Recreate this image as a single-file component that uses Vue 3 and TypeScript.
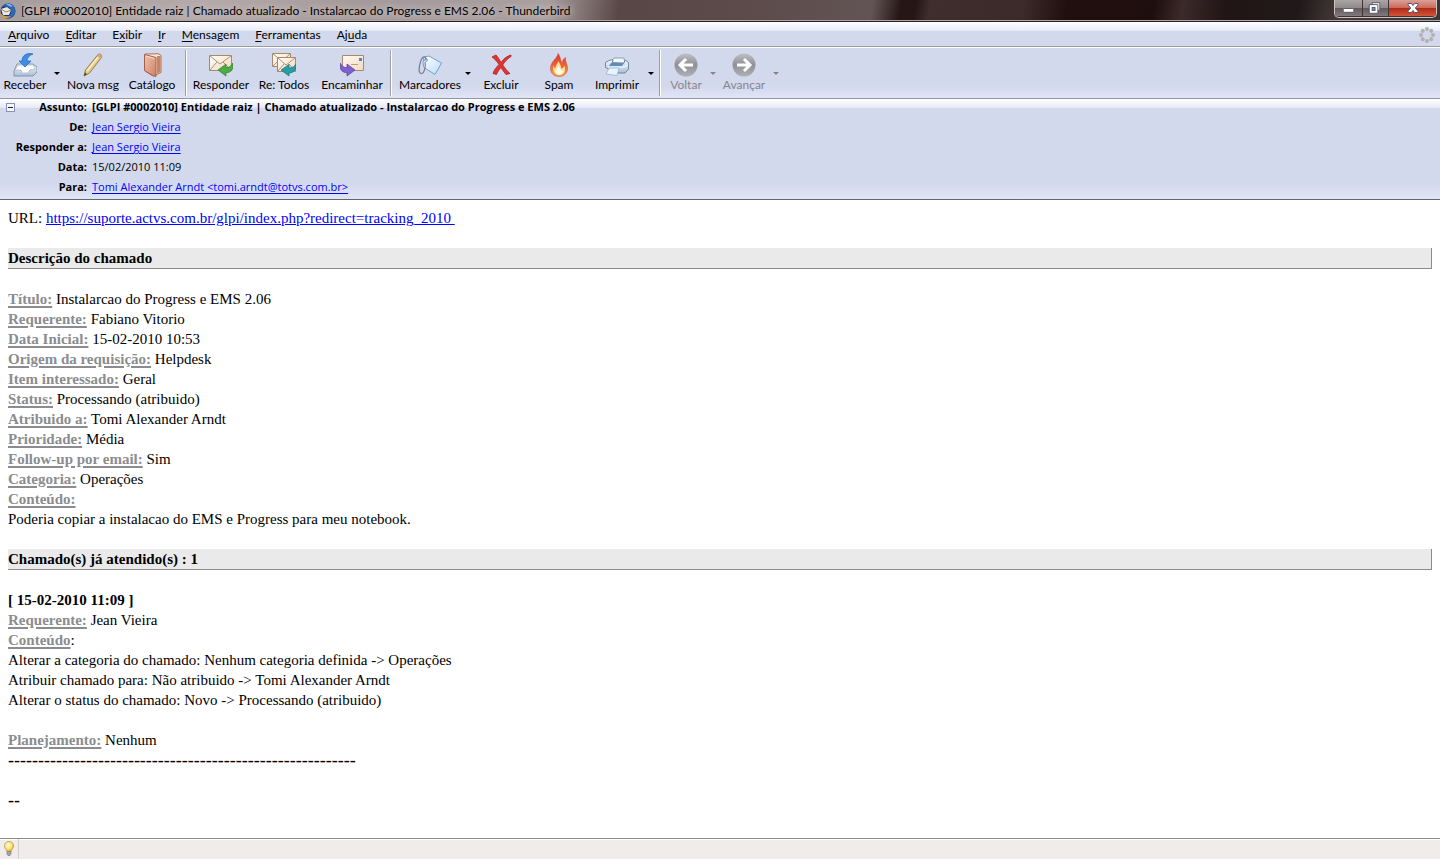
<script setup lang="ts">
interface MenuEntry { before: string; key: string; after: string }
interface Field { label: string; value: string }

const windowTitle = '[GLPI #0002010] Entidade raiz | Chamado atualizado - Instalarcao do Progress e EMS 2.06 - Thunderbird'

const menus: MenuEntry[] = [
  { before: '', key: 'A', after: 'rquivo' },
  { before: '', key: 'E', after: 'ditar' },
  { before: 'E', key: 'x', after: 'ibir' },
  { before: '', key: 'I', after: 'r' },
  { before: '', key: 'M', after: 'ensagem' },
  { before: '', key: 'F', after: 'erramentas' },
  { before: 'Aj', key: 'u', after: 'da' },
]

const details: Field[] = [
  { label: 'Título:', value: 'Instalarcao do Progress e EMS 2.06' },
  { label: 'Requerente:', value: 'Fabiano Vitorio' },
  { label: 'Data Inicial:', value: '15-02-2010 10:53' },
  { label: 'Origem da requisição:', value: 'Helpdesk' },
  { label: 'Item interessado:', value: 'Geral' },
  { label: 'Status:', value: 'Processando (atribuido)' },
  { label: 'Atribuido a:', value: 'Tomi Alexander Arndt' },
  { label: 'Prioridade:', value: 'Média' },
  { label: 'Follow-up por email:', value: 'Sim' },
  { label: 'Categoria:', value: 'Operações' },
  { label: 'Conteúdo:', value: '' },
]

const changes: string[] = [
  'Alterar a categoria do chamado: Nenhum categoria definida -> Operações',
  'Atribuir chamado para: Não atribuido -> Tomi Alexander Arndt',
  'Alterar o status do chamado: Novo -> Processando (atribuido)',
]

const rule = '-'.repeat(58)
const ring: number[] = [0, 45, 90, 135, 180, 225, 270, 315]
</script>

<template>
  <div class="window">
    <svg class="defs" width="0" height="0" aria-hidden="true">
      <defs>
        <linearGradient id="paper" x1="0" y1="0" x2="1" y2="1">
          <stop offset="0" stop-color="#fffdf6" /><stop offset="1" stop-color="#f3d9bd" />
        </linearGradient>
        <linearGradient id="steel" x1="0" y1="0" x2="0" y2="1">
          <stop offset="0" stop-color="#f4f8fc" /><stop offset="1" stop-color="#a9bfd6" />
        </linearGradient>
        <linearGradient id="sky" x1="0" y1="0" x2="1" y2="1">
          <stop offset="0" stop-color="#ffffff" /><stop offset="1" stop-color="#bcdcf8" />
        </linearGradient>
        <linearGradient id="book" x1="0" y1="0" x2="1" y2="1">
          <stop offset="0" stop-color="#efc3ae" /><stop offset="1" stop-color="#cf8063" />
        </linearGradient>
        <linearGradient id="fire" x1="0" y1="0" x2="0" y2="1">
          <stop offset="0" stop-color="#d8302c" /><stop offset="0.55" stop-color="#f0683a" /><stop offset="1" stop-color="#f9a648" />
        </linearGradient>
        <linearGradient id="disc" x1="0" y1="0" x2="0" y2="1">
          <stop offset="0" stop-color="#bfc0c5" /><stop offset="0.5" stop-color="#8f9096" /><stop offset="1" stop-color="#b0b1b7" />
        </linearGradient>
        <radialGradient id="glow" cx="0.4" cy="0.35" r="0.7">
          <stop offset="0" stop-color="#fffce0" /><stop offset="0.6" stop-color="#fbe36a" /><stop offset="1" stop-color="#dfa02c" />
        </radialGradient>
      </defs>
    </svg>

    <header class="titlebar">
      <svg class="app-icon" viewBox="0 0 16 16">
        <circle cx="8" cy="8" r="7.5" fill="#17346f" />
        <path d="M1 5C3 1 8-.5 12 1.500C15 3.500 16.500 8 14 12C12 15 8 16 5 15C9 14 12 11 11 7C10 4 5 2 1 5Z" fill="#2c69b5" />
        <path d="M6 1C9 0 12 2 12.500 4L9 3Z" fill="#82b9e8" />
        <path d="M1 6L7 4L11 7L9 12L3 12Z" fill="#eee9db" />
        <path d="M1 6L6 9L11 7" fill="none" stroke="#94866f" />
        <path d="M0 9C2 13 6 14 11 13C8 16 3 16 1 13Z" fill="#d09a4a" />
      </svg>
      <h1 class="title">{{ windowTitle }}</h1>
      <div class="window-buttons">
        <button type="button" class="win minimize" aria-label="Minimizar">
          <svg viewBox="0 0 28 16"><rect x="8.500" y="8.500" width="11" height="4" rx="1" fill="#fff" stroke="#54566a" /></svg>
        </button>
        <button type="button" class="win restore" aria-label="Restaurar">
          <svg viewBox="0 0 26 16">
            <path d="M9.500 2.500H17.500V10.500H9.500Z" fill="#fff" stroke="#54566a" />
            <path d="M6.500 4.500H15.500V13.500H6.500Z" fill="#fff" stroke="#54566a" />
            <rect x="9.500" y="7.500" width="3" height="3" fill="#8c8a91" stroke="#54566a" />
          </svg>
        </button>
        <button type="button" class="win close" aria-label="Fechar">
          <svg viewBox="0 0 46 16">
            <path d="M18.500 3.500H22L23.500 5.500L25 3.500H28.500V5L25.800 8L28.500 11V12.500H25L23.500 10.500L22 12.500H18.500V11L21.200 8L18.500 5Z" fill="#fff" stroke="#54566a" />
          </svg>
        </button>
      </div>
    </header>

    <nav class="menubar">
      <button v-for="m in menus" :key="m.key" type="button" class="menu">{{ m.before }}<u>{{ m.key }}</u>{{ m.after }}</button>
      <svg class="throbber" viewBox="0 0 16 16">
        <circle v-for="a in ring" :key="a" cx="8" cy="2" r="2" fill="#b1b1b1" :transform="`rotate(${a} 8 8)`" />
      </svg>
    </nav>

    <div class="toolbar">
      <button type="button" class="tool w50">
        <svg viewBox="0 0 24 24">
          <path d="M4 11L1 18V23H20L24 19V14L20 11Z" fill="url(#steel)" stroke="#8195ad" />
          <path d="M5 12H20L22 16L17 17L15 20H9L8 17H2Z" fill="#fff" stroke="#a5b5c8" stroke-width=".7" />
          <path d="M20 1C14-.5 9 2 9 8H6L12 14L18 8H14C14 5 16 2.500 20 1Z" fill="#3f8de4" stroke="#2066bd" stroke-width=".7" />
        </svg>
        <span>Receber</span>
      </button>
      <button type="button" class="drop w13" aria-label="Opções de recebimento"><i></i></button>
      <button type="button" class="tool w60">
        <svg viewBox="0 0 24 24">
          <path d="M3 23L4.500 17L17 1.500C18-.2 22 2 20.500 4.500L8.500 20Z" fill="#e3c98e" stroke="#9c7d45" />
          <path d="M6 18L18 3" stroke="#f9edc8" stroke-width="1.600" />
          <path d="M3 23L4 19.500L6 21.200Z" fill="#4f3c22" />
          <path d="M16 3L19.500 6L21 3.500L18.500 1Z" fill="#d7a583" />
        </svg>
        <span>Nova msg</span>
      </button>
      <button type="button" class="tool w58">
        <svg viewBox="0 0 24 24">
          <path d="M5 1L18.500 .8L21 2.500V19.500L13 23L5 18Z" fill="#f8e6da" stroke="#b06f57" />
          <path d="M17 3L20.500 3V19L17 20.500Z" fill="#c98368" />
          <path d="M4.500 1.500L16 4.500V23.500L12.500 22.500L4.500 17.500Z" fill="url(#book)" stroke="#a55e48" />
          <path d="M6 3L14.500 5.500" stroke="#f8dccd" />
        </svg>
        <span>Catálogo</span>
      </button>
      <span class="separator"></span>
      <button type="button" class="tool w58">
        <svg viewBox="0 0 24 24">
          <path d="M.5 2.500H22.500V17.500H.5Z" fill="url(#paper)" stroke="#a8896b" />
          <path d="M1 3L11 11L22 3M1 17L8 9M22 17L14 9" fill="none" stroke="#ad9276" />
          <path d="M24 10C25 17 21 20 17 19.500V23L9 17L17 11V14.500C20 15 22 13 24 10Z" fill="#4dac43" stroke="#2b7e29" stroke-width=".7" />
        </svg>
        <span>Responder</span>
      </button>
      <button type="button" class="tool w68">
        <svg viewBox="0 0 24 24">
          <path d="M.5.500H18.500V13.500H.5Z" fill="url(#paper)" stroke="#a8896b" />
          <path d="M1 1L10 8L18 1M1 13L7 7" fill="none" stroke="#ad9276" />
          <path d="M5.500 4.500H23.500V18.500H5.500Z" fill="url(#paper)" stroke="#a8896b" />
          <path d="M6 5L14 12L23 5M6 18L12 11M23 18L17 11" fill="none" stroke="#ad9276" />
          <path d="M24 11C25 17 21 20 17 20V23L9 17L17 11.500V15C20 15 22 14 24 11Z" fill="#289da4" stroke="#14747e" stroke-width=".7" />
        </svg>
        <span>Re: Todos</span>
      </button>
      <button type="button" class="tool w68">
        <svg viewBox="0 0 24 24">
          <path d="M2.500 2.500H23.500V17.500H2.500Z" fill="url(#paper)" stroke="#a8896b" />
          <rect x="19" y="5" width="3" height="3" fill="#5b78e6" />
          <path d="M11 11.500H18" stroke="#b59c82" />
          <path d="M0 10C-1 17 3 20 7 19.500V23L15 17L7 11V14.500C4 15 2 13 0 10Z" fill="#8062cd" stroke="#5438a3" stroke-width=".7" />
        </svg>
        <span>Encaminhar</span>
      </button>
      <span class="separator"></span>
      <button type="button" class="tool w66">
        <svg viewBox="0 0 24 24">
          <path d="M5 10L6 4L11 3L23.500 10L17 21.500L6 14.500Z" fill="url(#sky)" stroke="#6f9fd1" />
          <circle cx="8" cy="7" r="1.500" fill="#d3daee" stroke="#6f9fd1" stroke-width=".8" />
          <path d="M8 7C8 2 4 3 2.500 9C.5 15 .5 20 3 20.500C6.500 21 8 13 7 9" fill="none" stroke="#777e8b" stroke-width="1.200" />
        </svg>
        <span>Marcadores</span>
      </button>
      <button type="button" class="drop w9" aria-label="Lista de marcadores"><i></i></button>
      <button type="button" class="tool w58">
        <svg viewBox="0 0 24 24">
          <path d="M3 4L7 2C9 4 10.500 7 12 9.500C14.500 6 18 3 22 2V3.500C18 6 15.500 9 13.700 12C16 15 18 18 21 20.500L17 21.500C15 19 13.500 17 12 14.500C10 17 8 19.500 7.500 21.500L4 20.500C5 17 7.500 14 10 11.500C8 8.500 6 6 3 4Z" fill="#e23530" stroke="#a81d1e" stroke-width=".8" />
        </svg>
        <span>Excluir</span>
      </button>
      <button type="button" class="tool w58">
        <svg viewBox="0 0 24 24">
          <path d="M11 .5C11 5 3.500 8 3.500 15.500C3.500 20 7 23.500 12 23.500C17 23.500 20.500 20 20.500 15.500C20.500 11 18 9 18.500 4.500C16 6 15.500 8 15.500 10C13 8 14 4 11 .5Z" fill="url(#fire)" stroke="#d4513b" stroke-width=".6" />
          <path d="M6.500 12C5 18 8 22 12 22C17 22 19 18 17.500 13C16.500 15 15 15.500 14 15.500C14 12 12.500 10 11 8C11 11 8.500 12 8.500 15.500C7 15 6.500 14 6.500 12Z" fill="#ffe79e" />
          <path d="M12 13C11 15 9 17 9 19C9 23 16 23 16 18C14 18 12 16 12 13Z" fill="#fffdf0" />
        </svg>
        <span>Spam</span>
      </button>
      <button type="button" class="tool w58">
        <svg viewBox="0 0 24 24">
          <path d="M6 9L9 5H19L20 11Z" fill="#f1f7fd" stroke="#87a3bf" />
          <path d="M.5 9.500L5 7H8L7 10H19L20 7L23.500 9.500V16L20 20H12L.5 14.500Z" fill="url(#steel)" stroke="#7087a0" />
          <path d="M6 10H19L17 13H4Z" fill="#5e8db8" />
          <path d="M3 14H19L23 12" fill="none" stroke="#f7fbff" />
          <path d="M4 15H14L12 22.500L1 21Z" fill="#e6f4ff" stroke="#8faac5" stroke-width=".7" />
        </svg>
        <span>Imprimir</span>
      </button>
      <button type="button" class="drop w9" aria-label="Opções de impressão"><i></i></button>
      <span class="separator"></span>
      <button type="button" class="tool w40" disabled>
        <svg viewBox="0 0 24 24">
          <circle cx="12" cy="12" r="11.500" fill="url(#disc)" />
          <path d="M19 12H7M12 6L6 12L12 18" fill="none" stroke="#fff" stroke-width="3" />
        </svg>
        <span>Voltar</span>
      </button>
      <button type="button" class="drop w13" disabled aria-label="Histórico anterior"><i></i></button>
      <button type="button" class="tool w50" disabled>
        <svg viewBox="0 0 24 24">
          <circle cx="12" cy="12" r="11.500" fill="url(#disc)" />
          <path d="M5 12H17M12 6L18 12L12 18" fill="none" stroke="#fff" stroke-width="3" />
        </svg>
        <span>Avançar</span>
      </button>
      <button type="button" class="drop w13" disabled aria-label="Histórico seguinte"><i></i></button>
    </div>

    <section class="headers">
      <button type="button" class="twisty" aria-label="Recolher cabeçalho"></button>
      <dl>
        <dt>Assunto:</dt><dd><b>[GLPI #0002010] Entidade raiz | Chamado atualizado - Instalarcao do Progress e EMS 2.06</b></dd>
        <dt>De:</dt><dd><a href="#">Jean Sergio Vieira</a></dd>
        <dt>Responder a:</dt><dd><a href="#">Jean Sergio Vieira</a></dd>
        <dt>Data:</dt><dd>15/02/2010 11:09</dd>
        <dt>Para:</dt><dd><a href="#">Tomi Alexander Arndt &lt;tomi.arndt@totvs.com.br&gt;</a></dd>
      </dl>
    </section>

    <main class="message">
      <p>URL: <a href="#">https://suporte.actvs.com.br/glpi/index.php?redirect=tracking_2010&nbsp;</a></p>
      <h2>Descrição do chamado</h2>
      <p v-for="f in details" :key="f.label"><b class="label">{{ f.label }}</b> {{ f.value }}</p>
      <p>Poderia copiar a instalacao do EMS e Progress para meu notebook.</p>
      <h2>Chamado(s) já atendido(s) : 1</h2>
      <p><b>[ 15-02-2010 11:09 ]</b></p>
      <p><b class="label">Requerente:</b> Jean Vieira</p>
      <p><b class="label">Conteúdo</b>:</p>
      <p v-for="c in changes" :key="c">{{ c }}</p>
      <p class="spaced"><b class="label">Planejamento:</b> Nenhum</p>
      <p class="dashes">{{ rule }}</p>
      <p class="dashes spaced">--</p>
    </main>

    <footer class="statusbar">
      <div class="status-icon">
        <svg viewBox="0 0 10 15">
          <path d="M5 .5C2 .5.5 2.500.5 5C.5 7.500 2.500 8 3 10.500H7C7.500 8 9.500 7.500 9.500 5C9.500 2.500 8 .5 5 .5Z" fill="url(#glow)" stroke="#c39740" stroke-width=".8" />
          <path d="M3 10.500H7V13L6 14.500H4L3 13Z" fill="#a5a5a5" stroke="#737373" stroke-width=".6" />
        </svg>
      </div>
    </footer>
  </div>
</template>

<style>
body {
  margin: 0;
}
</style>

<style scoped>
.window {
  min-height: 100vh;
  display: flex;
  flex-direction: column;
  background: #fff;
  color: #000;
  font: 12px/16px "Segoe UI", Lato, "Open Sans", sans-serif;
}
.defs {
  position: absolute;
}
button {
  margin: 0;
  padding: 0;
  border: 0;
  background: none;
  color: inherit;
  font: inherit;
}
a {
  color: #00f;
}

.titlebar {
  box-sizing: border-box;
  height: 22px;
  display: flex;
  align-items: flex-start;
  border-bottom: 1px solid #252225;
  box-shadow: inset 0 -1px #b3a5a6;
  background: linear-gradient(100deg, #a59c9d 0%, #b5a9a9 14%, #a49a9b 25%, #a99fa0 38%, #7a6b6b 41%, #594747 43%, #5d4b4b 52%, #625455 60.500%, #261616 62.500%, #261616 63.500%, #402e2f 64.500%, #3c2a2b 71%, #210f10 74%, #1f0e0e 80%, #3c2a2b 82%, #211515 85%, #201919 90%, #463b3a 93%, #3d3434 100%);
}
.app-icon {
  width: 16px;
  height: 16px;
  margin-top: 3px;
}
.title {
  flex: 1;
  min-width: 0;
  margin: 3px 0 0 5px;
  overflow: hidden;
  white-space: nowrap;
  font-size: 12px;
  font-weight: 400;
  line-height: 16px;
  text-shadow: 0 0 6px #cfc5c5, 0 0 8px #cfc5c5;
}
.window-buttons {
  box-sizing: border-box;
  height: 18px;
  margin-right: 3px;
  display: flex;
  overflow: hidden;
  border: 1px solid #cbc3c3;
  border-top: 0;
  border-radius: 0 0 5px 5px;
  background: #3f3435;
}
.win {
  width: 28px;
  height: 16px;
  border-right: 1px solid #3f3435;
  background: linear-gradient(#aaa4a5 0, #918a8b 48%, #625a5c 52%, #827a7b 100%);
}
.win svg {
  display: block;
  width: 100%;
  height: 16px;
}
.win.restore {
  width: 26px;
}
.win.close {
  width: 47px;
  border-right: 0;
  background: linear-gradient(#dba097 0, #cb6a5b 48%, #b02c16 52%, #d2553a 100%);
}

.menubar {
  box-sizing: border-box;
  height: 26px;
  display: flex;
  align-items: center;
  gap: 16px;
  padding: 0 5px 0 8px;
  border-bottom: 1px solid #fff;
  box-shadow: inset 0 -1px #9b9ba3;
  background: linear-gradient(#fff 0, #e6ebf7 9px, #d3d9ed 9px);
}
.menu u {
  text-underline-offset: 2px;
}
.throbber {
  width: 16px;
  height: 16px;
  margin-left: auto;
}

.toolbar {
  box-sizing: border-box;
  height: 51px;
  display: flex;
  align-items: stretch;
  border-bottom: 1px solid #94949c;
  background: linear-gradient(#d3d9ed 0, #d3d9ed 38px, #dfe4f6 50px);
}
.tool {
  display: flex;
  flex-direction: column;
  align-items: center;
  padding-top: 5px;
  white-space: nowrap;
}
.tool svg {
  flex: none;
  width: 24px;
  height: 24px;
}
.tool:disabled {
  color: #85868c;
}
.drop {
  display: flex;
  align-items: center;
  justify-content: center;
}
.drop i {
  border: 3px solid transparent;
  border-top-color: #000;
  border-bottom: 0;
}
.drop:disabled i {
  border-top-color: #85868c;
}
.separator {
  width: 1px;
  margin: 2px 6px 2px 4px;
  background: #a0a0a6;
  box-shadow: 1px 0 #fff;
}
.w9 { width: 9px; }
.w13 { width: 13px; }
.w40 { width: 40px; }
.w50 { width: 50px; }
.w58 { width: 58px; }
.w60 { width: 60px; }
.w66 { width: 66px; }
.w68 { width: 68px; }

.headers {
  display: flex;
  align-items: flex-start;
  padding-bottom: 4px;
  border-bottom: 1px solid #66666d;
  background: linear-gradient(#fff 0, #e4e9f6 9px, #d3d9ed 9px, #d3d9ed 84px, #dfe4f6 100%);
  font: 11px/16px "Segoe UI", "Open Sans", "Noto Sans", sans-serif;
}
.twisty {
  box-sizing: border-box;
  width: 9px;
  height: 9px;
  margin: 4px 0 0 6px;
  border: 1px solid #8a91bd;
  background: linear-gradient(#222, #222) center / 5px 1px no-repeat #f5f6fb;
}
dl {
  margin: 0;
  display: grid;
  grid-template-columns: 72px 1fr;
  gap: 4px 5px;
}
dt {
  text-align: right;
  font-weight: 700;
  white-space: nowrap;
}
dd {
  margin: 0;
}
.headers a {
  text-underline-offset: 2px;
}

.message {
  flex: 1;
  padding: 8px;
  font: 15px/20px "Times New Roman", "Liberation Serif", serif;
}
.message p {
  margin: 0;
  min-height: 20px;
}
.message .spaced {
  margin-top: 20px;
}
.message .dashes {
  font-size: 18px;
}
.message h2 {
  margin: 20px 0;
  border: solid #8b8b8b;
  border-width: 0 1px 1px 0;
  background: #eaeaea;
  font-size: 15px;
  font-weight: 700;
  line-height: 20px;
}
.label {
  color: #8b8c8f;
  text-decoration: underline 2px;
  text-underline-offset: 2px;
}

.statusbar {
  box-sizing: border-box;
  height: 22px;
  display: flex;
  border-top: 1px solid #8c8c8c;
  border-bottom: 1px solid #fff;
  background: #f0ecec;
  box-shadow: inset 0 1px #fff;
}
.status-icon {
  width: 18px;
  border-right: 1px solid #d2cfcf;
}
.status-icon svg {
  display: block;
  width: 10px;
  height: 15px;
  margin: 2px 0 0 4px;
}
</style>
